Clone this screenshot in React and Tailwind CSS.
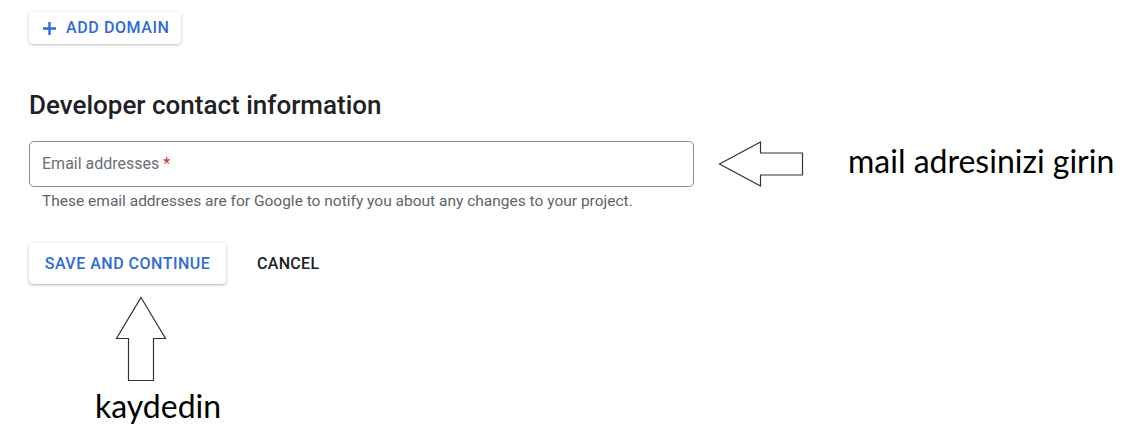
import React from "react";

function LeftArrow() {
  return (
    <svg width="86" height="48" viewBox="0 0 86 48" className="shrink-0">
      <polygon
        points="1.5,24 42.5,2 42.5,13 84.5,13 84.5,35 42.5,35 42.5,46"
        fill="white"
        stroke="#333"
        strokeWidth="1.2"
      />
    </svg>
  );
}

function UpArrow() {
  return (
    <svg width="52" height="86" viewBox="0 0 52 86">
      <polygon
        points="26,1.5 50.5,42.5 38.5,42.5 38.5,84.5 13.5,84.5 13.5,42.5 1.5,42.5"
        fill="white"
        stroke="#333"
        strokeWidth="1.2"
      />
    </svg>
  );
}

export default function App() {
  return (
    <div className="w-[1125px] h-[441px] bg-white overflow-hidden font-['Roboto',sans-serif] pl-[29px] pt-[12px]">
      <button className="flex items-center h-[32px] w-[152px] rounded-[4px] bg-white shadow-[0_1px_3px_rgba(60,64,67,0.35)] pl-[13px] gap-[9px] text-[#2f6ad9] text-[16px] font-medium tracking-[0.6px]">
        <svg width="15" height="15" viewBox="0 0 15 15">
          <path d="M7.5 1v13M1 7.5h13" stroke="#2f6ad9" strokeWidth="2.4" />
        </svg>
        ADD DOMAIN
      </button>

      <h2 className="mt-[46px] text-[26px] leading-[30px] font-medium text-[#202124]">
        Developer contact information
      </h2>

      <div className="mt-[21px] flex items-center h-[46px]">
        <div className="w-[665px] h-[46px] rounded-[5px] border border-[#8a8d91] flex items-center pl-[12px] text-[16px] text-[#6b6f73]">
          Email addresses<span className="text-[#d93025] ml-[4px]">*</span>
        </div>
        <div className="ml-[24px]">
          <LeftArrow />
        </div>
        <span className="ml-[44px] mb-[7px] text-[32px] leading-[38px] text-black font-['Lato',sans-serif]">
          mail adresinizi girin
        </span>
      </div>

      <p className="mt-[5px] pl-[13px] text-[15.5px] leading-[18px] text-[#5f6368]">
        These email addresses are for Google to notify you about any changes to your project.
      </p>

      <div className="mt-[33px] flex items-center">
        <button className="h-[41px] w-[197px] rounded-[4px] bg-white shadow-[0_1px_3px_rgba(60,64,67,0.4)] text-[#2f6ad9] text-[16px] font-medium tracking-[0.5px]">
          SAVE AND CONTINUE
        </button>
        <button className="ml-[31px] text-[16px] font-medium text-[#202124] tracking-[0.3px]">
          CANCEL
        </button>
      </div>

      <div className="mt-[12px] ml-[86px] flex flex-col items-start">
        <UpArrow />
      </div>
      <div className="ml-[66px] mt-[6px] text-[32px] leading-[36px] text-black font-['Lato',sans-serif]">
        kaydedin
      </div>
    </div>
  );
}
